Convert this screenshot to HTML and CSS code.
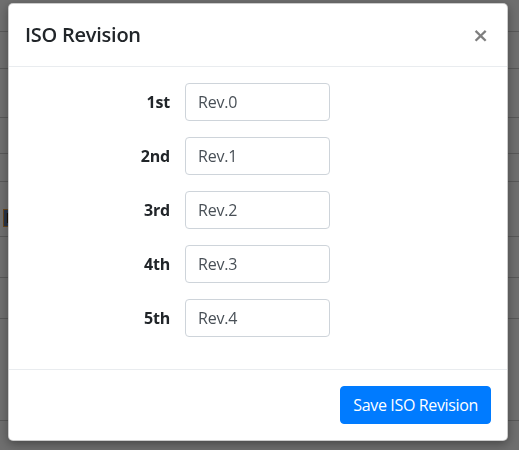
FILE: index.html
```html
<!DOCTYPE html>
<html lang="en">
<head>
<meta charset="utf-8">
<title>ISO Revision</title>
<link rel="stylesheet" href="styles.css">
</head>
<body>
<div class="page">
  <div class="row r1"></div>
  <div class="row r2"></div>
  <div class="row r3"></div>
  <div class="row r4"></div>
  <div class="row r5"></div>
  <div class="row r6"><span class="tag">D</span></div>
  <div class="row r7"></div>
  <div class="row r8"></div>
  <div class="row r9"></div>
</div>
<div class="backdrop"></div>
<div class="modal">
  <div class="modal-header">
    <h5 class="modal-title">ISO Revision</h5>
    <button class="close" type="button">&times;</button>
  </div>
  <div class="modal-body">
    <div class="form-group"><label class="col-label">1st</label><input class="form-control" type="text" value="Rev.0"></div>
    <div class="form-group"><label class="col-label">2nd</label><input class="form-control" type="text" value="Rev.1"></div>
    <div class="form-group"><label class="col-label">3rd</label><input class="form-control" type="text" value="Rev.2"></div>
    <div class="form-group"><label class="col-label">4th</label><input class="form-control" type="text" value="Rev.3"></div>
    <div class="form-group"><label class="col-label">5th</label><input class="form-control" type="text" value="Rev.4"></div>
  </div>
  <div class="modal-footer">
    <button class="btn-primary" type="button">Save ISO Revision</button>
  </div>
</div>
</body>
</html>
```
FILE: styles.css
```css
* { box-sizing: border-box; }
html, body { margin: 0; padding: 0; }
body {
  font-family: "Segoe UI", "Open Sans", "Noto Sans", sans-serif;
  font-size: 16px;
  line-height: 1.5;
  color: #212529;
  background: #dcdcdc;
  width: 519px;
  height: 450px;
  overflow: hidden;
}
.page { display: flex; flex-direction: column; }
.row { border-bottom: 1px solid #b0b0b0; position: relative; }
.r1 { height: 32px; }
.r2 { height: 37px; }
.r3 { height: 49px; }
.r4 { height: 36px; }
.r5 { height: 28px; }
.r6 { height: 55px; padding-top: 23px; padding-left: 3px; }
.r7 { height: 41px; }
.r8 { height: 41px; }
.r9 { height: 102px; }
.tag {
  display: inline-block;
  font-weight: 700;
  font-size: 14px;
  line-height: 14px;
  padding: 1px 2px;
  border: 1px solid #c98a3a;
  background: #506890;
  color: #000;
}
.backdrop {
  position: fixed;
  inset: 0;
  background: rgba(0, 0, 0, 0.5);
}
.modal {
  position: fixed;
  left: 8px;
  top: 3px;
  width: 500px;
  background: #fff;
  border: 1px solid rgba(0, 0, 0, 0.2);
  border-radius: 5px;
  box-shadow: 0 3px 10px rgba(0, 0, 0, 0.35);
  display: flex;
  flex-direction: column;
}
.modal-header {
  display: flex;
  align-items: flex-start;
  padding: 16px;
  border-bottom: 1px solid #e9ecef;
}
.modal-title {
  margin: 0;
  font-size: 20px;
  font-weight: 600;
  letter-spacing: -0.25px;
  line-height: 1.5;
}
.close {
  margin: -16px -16px -16px auto;
  padding: 16px 18px 16px 16px;
  background: transparent;
  border: 0;
  font-family: "DejaVu Sans", sans-serif;
  font-size: 20px;
  font-weight: 700;
  line-height: 30px;
  color: #000;
  opacity: 0.5;
  cursor: pointer;
}
.modal-body {
  padding: 16px;
}
.form-group {
  display: grid;
  grid-template-columns: 145px 145px;
  column-gap: 15px;
  align-items: center;
  margin-bottom: 16px;
}
.col-label {
  text-align: right;
  font-weight: 700;
  letter-spacing: -0.2px;
}
.form-control {
  display: block;
  width: 145px;
  height: 38px;
  padding: 6px 12px;
  font-family: inherit;
  font-size: 16px;
  line-height: 1.5;
  letter-spacing: -0.2px;
  color: #495057;
  background: #fff;
  border: 1px solid #ced4da;
  border-radius: 4px;
  outline: none;
}
.modal-footer {
  display: flex;
  justify-content: flex-end;
  padding: 12px;
  border-top: 1px solid #e9ecef;
}
.btn-primary {
  margin: 4px;
  height: 38px;
  padding: 6px 12px;
  font-family: inherit;
  font-size: 16px;
  line-height: 1.5;
  letter-spacing: -0.35px;
  color: #fff;
  background: #007bff;
  border: 1px solid #007bff;
  border-radius: 4px;
  cursor: pointer;
}
```
